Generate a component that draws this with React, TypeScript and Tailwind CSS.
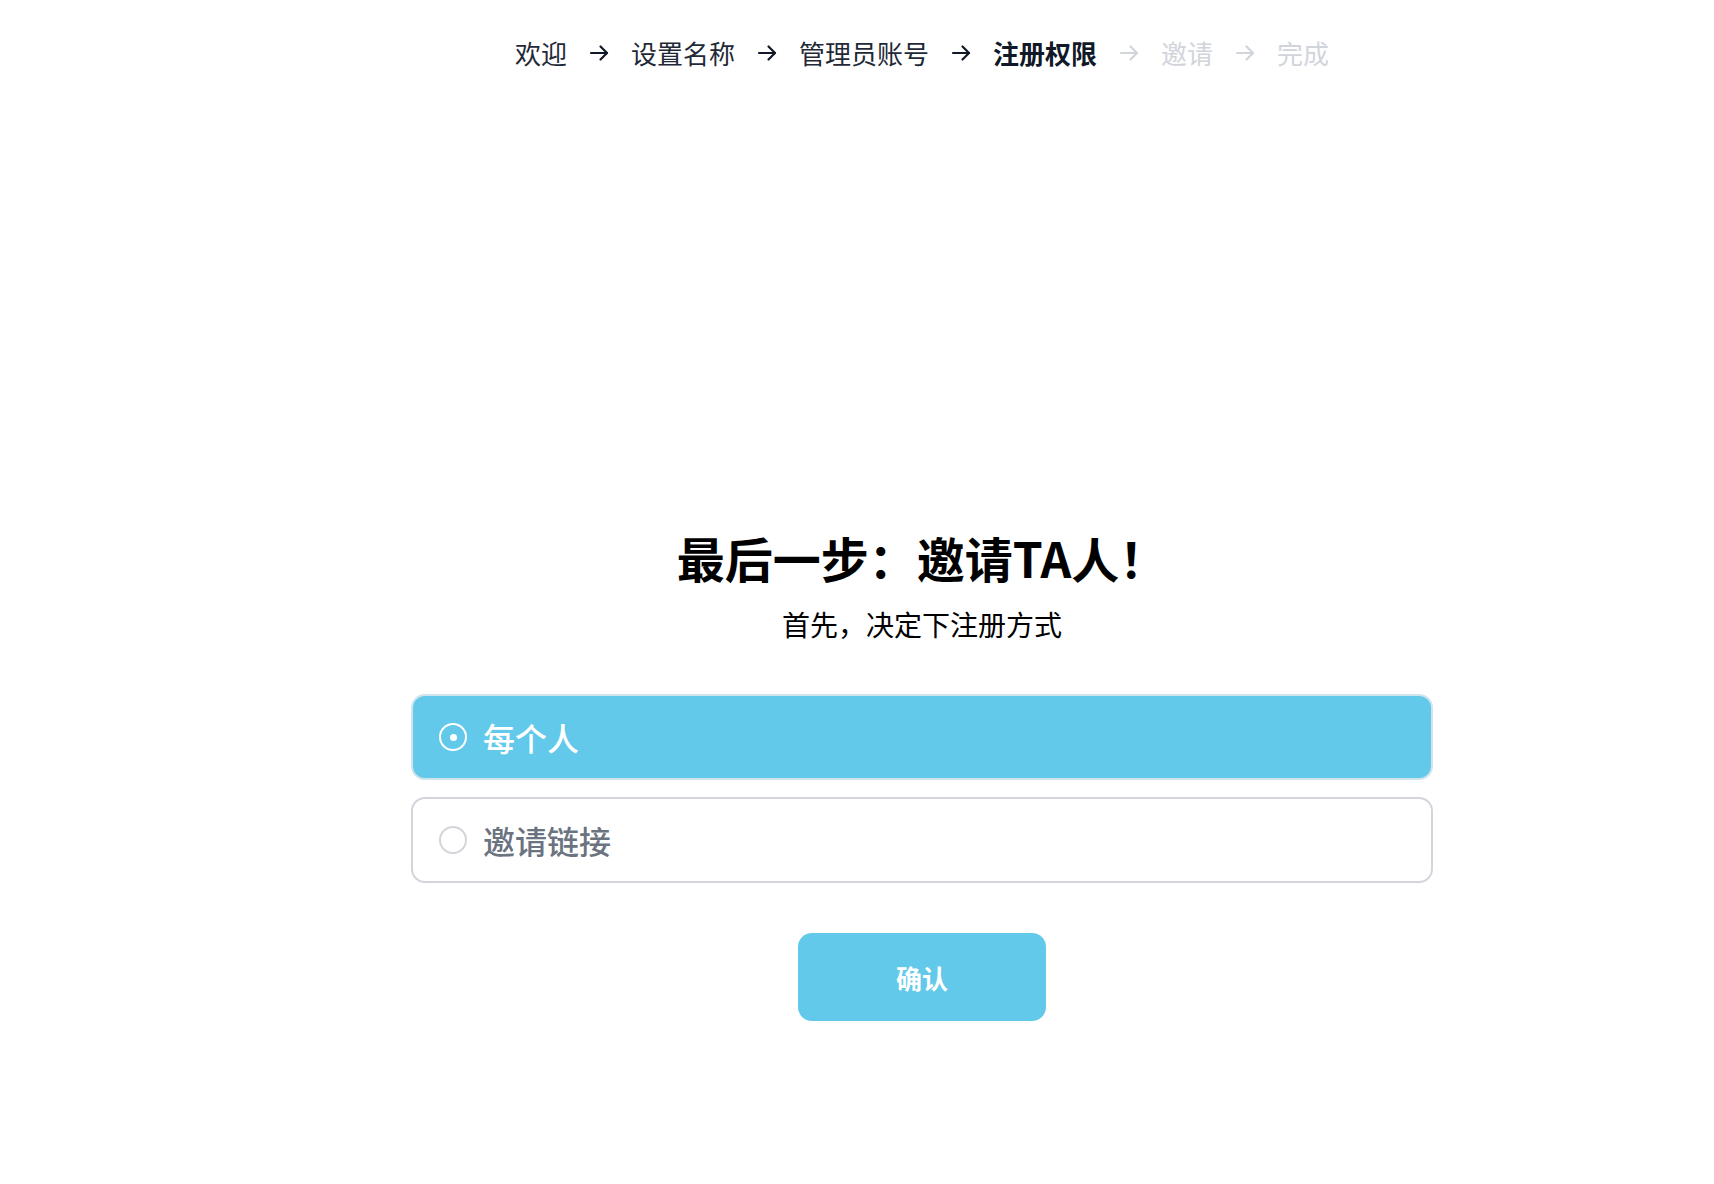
import React from "react";

const font = { fontFamily: '"Noto Sans CJK SC", "Noto Sans", sans-serif' };

function Arrow({ light }: { light?: boolean }) {
  return (
    <svg
      width="24"
      height="24"
      viewBox="0 0 24 24"
      fill="none"
      stroke="currentColor"
      strokeWidth="2.2"
      strokeLinecap="round"
      strokeLinejoin="round"
      className={light ? "text-[#d1d5db] mx-[20px]" : "text-[#111827] mx-[20px]"}
    >
      <path d="M4 12h16" />
      <path d="M13.5 5.5L20 12l-6.5 6.5" />
    </svg>
  );
}

export default function App() {
  return (
    <div
      className="min-h-screen bg-white flex flex-col items-center pl-[130px]"
      style={font}
    >
      <nav className="pt-[33px] flex items-center text-[26px] leading-[39px]">
        <span className="text-[#1f2937]">欢迎</span>
        <Arrow />
        <span className="text-[#1f2937]">设置名称</span>
        <Arrow />
        <span className="text-[#1f2937]">管理员账号</span>
        <Arrow />
        <span className="text-[#111827] font-bold">注册权限</span>
        <Arrow light />
        <span className="text-[#d1d5db]">邀请</span>
        <Arrow light />
        <span className="text-[#d1d5db]">完成</span>
      </nav>

      <h1 className="mt-[456px] text-[48px] leading-[58px] font-bold text-black">
        最后一步：邀请TA人！
      </h1>
      <p className="mt-[18px] text-[28px] leading-[41px] text-black">
        首先，决定下注册方式
      </p>

      <div className="mt-[49px] w-[1022px] flex flex-col gap-[17px]">
        <button className="h-[86px] w-full rounded-[14px] bg-[#62c9ea] border-2 border-[#cfe4ec] flex items-center pl-[26px] text-left">
          <span className="w-[28px] h-[28px] rounded-full border-2 border-white flex items-center justify-center">
            <span className="w-[7px] h-[7px] rounded-full bg-white" />
          </span>
          <span className="ml-[16px] text-[32px] leading-none text-white font-medium">
            每个人
          </span>
        </button>
        <button className="h-[86px] w-full rounded-[14px] bg-white border-2 border-[#d4d5dc] flex items-center pl-[26px] text-left">
          <span className="w-[28px] h-[28px] rounded-full border-2 border-[#d4d5dc]" />
          <span className="ml-[16px] text-[32px] leading-none text-[#6b7280] font-medium">
            邀请链接
          </span>
        </button>
      </div>

      <button className="mt-[50px] w-[248px] h-[88px] rounded-[14px] bg-[#62c9ea] text-white text-[26px] font-bold">
        确认
      </button>
    </div>
  );
}
